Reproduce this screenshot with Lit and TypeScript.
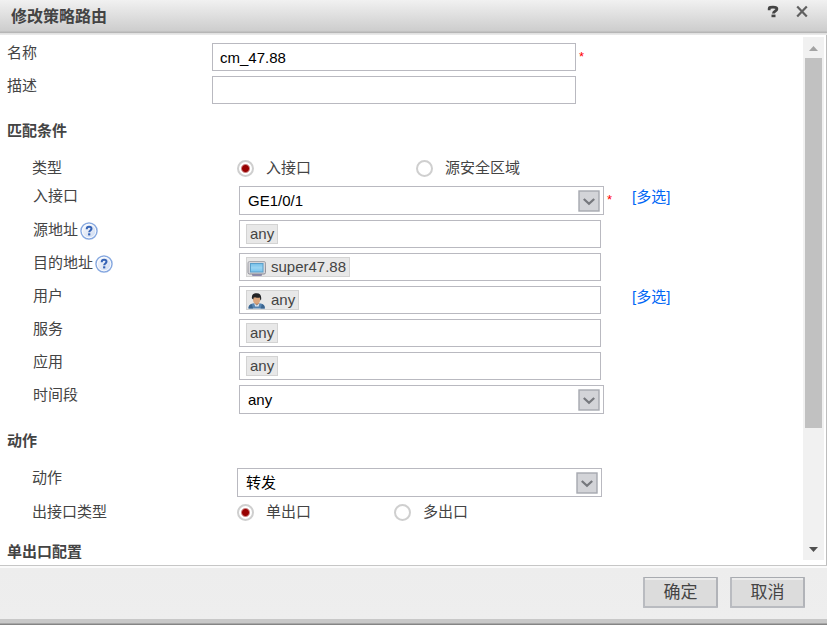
import { LitElement, html, css, nothing, TemplateResult } from "lit";
import { customElement, property } from "lit/decorators.js";

const monitorIcon = html`<svg class="icon" width="20" height="16" viewBox="0 0 20 16" aria-hidden="true">
  <defs>
    <linearGradient id="frame" x1="0" y1="0" x2="0" y2="1"><stop offset="0" stop-color="#a9a9ae" /><stop offset="1" stop-color="#8a8a94" /></linearGradient>
    <linearGradient id="glass" x1="0" y1="0" x2="0" y2="1"><stop offset="0" stop-color="#74bfe8" /><stop offset=".5" stop-color="#9ad4f2" /><stop offset="1" stop-color="#74c3ee" /></linearGradient>
  </defs>
  <rect x="5" y="13" width="10" height="3" rx="1" fill="#8e8aae" />
  <rect x="1" y="1.5" width="17.5" height="12.5" rx="1.5" fill="#d6d6da" stroke="url(#frame)" />
  <rect x="3.5" y="3.5" width="12.5" height="8.5" fill="url(#glass)" stroke="#5a9fca" />
</svg>`;

const userIcon = html`<svg class="icon" width="20" height="16" viewBox="0 0 20 16" aria-hidden="true">
  <path d="M1.5 15.5C1.5 12 3.5 10.8 7 10.2H12.5C16 10.8 17.8 12 17.8 15.5Z" fill="#5685b3" />
  <path d="M1.5 15.5C1.5 13.2 2.5 11.8 4.5 11.1L6.2 15.5ZM17.8 15.5C17.8 13.2 17 11.8 15 11.1L13.6 15.5Z" fill="#3a648f" />
  <path d="M7 10L9.8 12.6L12.6 10L11.6 13.4H8.2Z" fill="#dfe6ee" />
  <path d="M7.8 8H12V10.3L9.8 12.2L7.8 10.3Z" fill="#c58b62" />
  <ellipse cx="9.6" cy="6.4" rx="3.6" ry="4.2" fill="#dba67e" />
  <path d="M5 5.6C4.2 1.7 6.6 .2 9.8 .2C13.2 .2 14.7 2.3 14.1 6.8L13.5 7.6L12.8 4.6C10.8 5 8.2 4.6 6.9 4.2L6.2 6.4Z" fill="#222326" />
</svg>`;

const helpIcon = html`<svg width="18" height="18" viewBox="0 0 18 18" aria-hidden="true">
  <defs>
    <linearGradient id="disc" x1="0" y1="0" x2="1" y2="1"><stop offset="0" stop-color="#ffffff" /><stop offset=".5" stop-color="#e3e9f5" /><stop offset="1" stop-color="#c9d9f3" /></linearGradient>
  </defs>
  <circle cx="9" cy="9" r="8" fill="url(#disc)" stroke="#86a8e0" stroke-width="1.5" />
  <circle cx="9" cy="9" r="6.8" fill="none" stroke="#fff" stroke-width=".8" />
  <path d="M6.7 7.2C6.7 5.6 7.6 4.8 9.1 4.8C10.6 4.8 11.5 5.6 11.5 6.8C11.5 8.4 9.2 8.5 9.2 10.2" fill="none" stroke="#3563b5" stroke-width="2" />
  <rect x="8.1" y="11.3" width="2.2" height="2.1" fill="#3563b5" />
</svg>`;

const base = css`
  *, *::before, *::after { box-sizing: border-box; }
  input, select, button { font: inherit; margin: 0; }
`;

@customElement("form-row")
class FormRow extends LitElement {
  @property() label = "";
  @property() kind: "text" | "select" | "tokens" = "text";
  @property() value = "";
  @property({ type: Boolean }) required = false;
  @property({ type: Boolean }) help = false;
  @property({ type: Boolean }) multi = false;
  @property({ attribute: false }) icon?: TemplateResult;

  static styles = [
    base,
    css`
      :host {
        display: grid;
        grid-template-columns: var(--label-width) minmax(0, var(--field-width)) 28px auto;
        justify-content: start;
      }
      .caption { display: flex; align-items: start; height: 20px; line-height: 20px; white-space: nowrap; }
      .help { display: flex; margin: 2px 0 0 2px; padding: 0; border: 0; background: none; }
      .text { width: 100%; height: 28px; padding: 0 7px; border: 1px solid #b9b9c0; border-radius: 0; background: #fff; color: #000; }
      .picker { display: grid; align-items: center; }
      .select { grid-area: 1 / 1; width: 100%; height: 29px; padding: 0 28px 0 8px; border: 1px solid #b9b9c0; border-radius: 0; background: #fff; color: #000; appearance: none; }
      .arrow { grid-area: 1 / 1; justify-self: end; margin-right: 4px; pointer-events: none; }
      .tokens { display: flex; align-items: center; height: 28px; margin-right: 3px; padding: 0 6px; border: 1px solid #b9b9c0; background: #fff; }
      .chip { display: flex; align-items: center; height: 20px; padding: 0 3px; border: 1px solid #d3d3d3; background: #e8e8e8; }
      .iconic { padding-left: 0; }
      .icon { margin: 2px 4px 0 0; }
      .entry { flex: 1; min-width: 0; height: 20px; padding: 0 4px; border: 0; outline: 0; background: none; }
      .star { padding-left: 3px; line-height: 28px; font-size: 13px; color: #f00; }
      .more { line-height: 22px; color: #0066f5; text-decoration: none; }
    `,
  ];

  private field() {
    if (this.kind === "select") {
      return html`<div class="picker">
        <select class="select" id="field"><option>${this.value}</option></select>
        <svg class="arrow" width="22" height="22" viewBox="0 0 22 22" aria-hidden="true">
          <rect x="1" y="1" width="20" height="20" fill="#d3d4d8" stroke="#a6a9b0" stroke-width="1.4" />
          <path d="M5.8 9L11 13.8L16.2 9" fill="none" stroke="#76787d" stroke-width="2.3" />
        </svg>
      </div>`;
    }
    if (this.kind === "tokens") {
      return html`<div class="tokens">
        <span class="chip ${this.icon ? "iconic" : ""}">${this.icon ?? nothing}${this.value}</span>
        <input class="entry" id="field" type="text" />
      </div>`;
    }
    return html`<input class="text" id="field" type="text" .value=${this.value} />`;
  }

  render() {
    return html`
      <div class="caption">
        <label for="field">${this.label}</label>
        ${this.help ? html`<button class="help" type="button" aria-label="帮助">${helpIcon}</button>` : nothing}
      </div>
      ${this.field()}
      <span class="star">${this.required ? "*" : nothing}</span>
      ${this.multi ? html`<a class="more" href="#">[多选]</a>` : nothing}
    `;
  }
}

@customElement("app-root")
class AppRoot extends LitElement {
  static styles = [
    base,
    css`
      :host { display: block; color: #444; font: 15px/20px "Liberation Sans", "Noto Sans CJK SC", sans-serif; }
      .dialog { display: flex; flex-direction: column; height: 100vh; background: #fff; }
      .header { display: flex; justify-content: space-between; height: 35px; padding: 0 18px 0 11px; background: linear-gradient(#f1f1f1, #cdcdcd 31px, #b6b6b6 32px, #b6b6b6 33px, #dedede 33px, #ececec); }
      .title { margin: 0; font-size: 16px; line-height: 33px; }
      .tools { display: flex; gap: 15px; padding-top: 5px; height: 20px; }
      .tool { display: flex; padding: 0; border: 0; background: none; }
      .body { flex: 1; min-height: 0; display: flex; padding: 2px 2px 5px 7px; border-right: 1px solid #bdbdbd; }
      .form { flex: 1; min-width: 0; overflow: hidden; padding-top: 6px; }
      .rows { display: flex; flex-direction: column; gap: 5px; --label-width: 205px; --field-width: 364px; }
      .nested { padding-left: 25px; --field-width: 365px; }
      .inset { padding-left: 1px; --label-width: 206px; }
      .section { margin: 17px 0; font-size: 15px; line-height: 20px; }
      .choices { display: flex; height: 23px; margin: 0; padding: 0; border: 0; }
      .legend { width: 205px; }
      .options { display: flex; align-items: start; gap: 105px; }
      .tight { gap: 83px; }
      .option { display: flex; align-items: center; gap: 12px; height: 20px; white-space: nowrap; }
      .radio { appearance: none; width: 17px; height: 17px; border: 2px solid #cfcfcf; border-radius: 50%; background: #fff; }
      .radio:checked { background: radial-gradient(circle, #980000 3px, #fff 5px); }
      .scrollbar { display: flex; flex-direction: column; align-items: center; width: 21px; background: #f1f1f1; }
      .step { display: block; width: 21px; height: 21px; }
      .track { flex: 1; width: 17px; }
      .thumb { height: 77%; background: #c1c1c1; }
      .footer { display: flex; justify-content: end; gap: 12px; height: 60px; padding: 11px 22px 0; border-top: 1px solid #c6c6c6; background: linear-gradient(#fafafa 2px, #ededed 2px, #eee 53px, #c8c8c8 53px, #c8c8c8 57px, #858585 58px); }
      .button { width: 75px; height: 31px; padding: 0; border: 2px solid #b9bbc0; border-top: 1px solid #a8abb0; border-right-color: #b1b3b8; border-radius: 1px; background: #dcdcdc; box-shadow: inset 0 2px #ececec; color: #444; font-size: 17px; line-height: 27px; }
    `,
  ];

  private choices(name: string, label: string, options: string[], tight = false) {
    return html`<div class="choices" role="radiogroup" aria-label=${label}>
      <span class="legend">${label}</span>
      <div class="options ${tight ? "tight" : ""}">
        ${options.map(
          (text, i) => html`<label class="option"><input class="radio" type="radio" name=${name} ?checked=${i === 0} />${text}</label>`
        )}
      </div>
    </div>`;
  }

  render() {
    return html`<div class="dialog" role="dialog" aria-labelledby="title">
      <header class="header">
        <h1 class="title" id="title">修改策略路由</h1>
        <div class="tools">
          <button class="tool" type="button" aria-label="帮助">
            <svg width="14" height="14" viewBox="0 0 14 14" aria-hidden="true">
              <path d="M3.2 5.2V3.4C3.2 2.5 4.6 2.2 7 2.2C9.6 2.2 10.9 2.6 10.9 4.1C10.9 6.2 7.4 5.7 7.4 8.6" fill="none" stroke="#444" stroke-width="2.8" />
              <rect x="5.5" y="9.6" width="4" height="2.6" fill="#444" />
            </svg>
          </button>
          <button class="tool" type="button" aria-label="关闭">
            <svg width="14" height="14" viewBox="0 0 14 14" aria-hidden="true">
              <path d="M2.2 1.5L11.8 11.5M11.8 1.5L2.2 11.5" stroke="#606060" stroke-width="2.2" />
            </svg>
          </button>
        </div>
      </header>
      <main class="body">
        <form class="form">
          <div class="rows">
            <form-row label="名称" value="cm_47.88" required></form-row>
            <form-row label="描述"></form-row>
          </div>
          <h2 class="section">匹配条件</h2>
          <div class="rows nested">
            ${this.choices("source", "类型", ["入接口", "源安全区域"])}
            <form-row class="inset" kind="select" label="入接口" value="GE1/0/1" required multi></form-row>
            <form-row class="inset" kind="tokens" label="源地址" value="any" help></form-row>
            <form-row class="inset" kind="tokens" label="目的地址" value="super47.88" help .icon=${monitorIcon}></form-row>
            <form-row class="inset" kind="tokens" label="用户" value="any" multi .icon=${userIcon}></form-row>
            <form-row class="inset" kind="tokens" label="服务" value="any"></form-row>
            <form-row class="inset" kind="tokens" label="应用" value="any"></form-row>
            <form-row class="inset" kind="select" label="时间段" value="any"></form-row>
          </div>
          <h2 class="section">动作</h2>
          <div class="rows nested">
            <form-row kind="select" label="动作" value="转发"></form-row>
            ${this.choices("exit", "出接口类型", ["单出口", "多出口"], true)}
          </div>
          <h2 class="section">单出口配置</h2>
        </form>
        <div class="scrollbar" aria-hidden="true">
          <svg class="step" viewBox="0 0 21 21"><path d="M6 14L10.5 9L15 14Z" fill="#a3a3a3" /></svg>
          <div class="track"><div class="thumb"></div></div>
          <svg class="step" viewBox="0 0 21 21"><path d="M6 8L15 8L10.5 13Z" fill="#505050" /></svg>
        </div>
      </main>
      <footer class="footer">
        <button class="button" type="button">确定</button>
        <button class="button" type="button">取消</button>
      </footer>
    </div>`;
  }
}
